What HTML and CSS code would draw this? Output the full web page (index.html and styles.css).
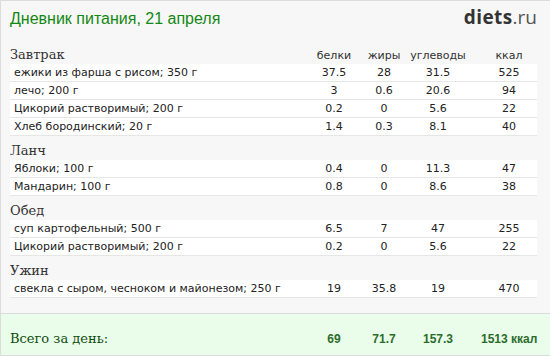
FILE: index.html
```
<!DOCTYPE html>
<html lang="ru">
<head>
<meta charset="utf-8">
<link rel="stylesheet" href="styles.css">
</head>
<body>
<div class="diary">
  <header class="top">
    <h1 class="title">Дневник питания, 21 апреля</h1>
    <div class="logo"><b>diets</b>.ru</div>
  </header>

  <section class="meal">
    <div class="meal-head grid"><span class="meal-name">Завтрак</span><span class="col">белки</span><span class="col">жиры</span><span class="col col-u">углеводы</span><span class="col k">ккал</span></div>
    <div class="row grid"><span class="food">ежики из фарша с рисом; 350 г</span><span class="num">37.5</span><span class="num">28</span><span class="num">31.5</span><span class="num k">525</span></div>
    <div class="row grid"><span class="food">лечо; 200 г</span><span class="num">3</span><span class="num">0.6</span><span class="num">20.6</span><span class="num k">94</span></div>
    <div class="row grid"><span class="food">Цикорий растворимый; 200 г</span><span class="num">0.2</span><span class="num">0</span><span class="num">5.6</span><span class="num k">22</span></div>
    <div class="row grid"><span class="food">Хлеб бородинский; 20 г</span><span class="num">1.4</span><span class="num">0.3</span><span class="num">8.1</span><span class="num k">40</span></div>
  </section>

  <section class="meal">
    <div class="meal-head grid"><span class="meal-name">Ланч</span></div>
    <div class="row grid"><span class="food">Яблоки; 100 г</span><span class="num">0.4</span><span class="num">0</span><span class="num">11.3</span><span class="num k">47</span></div>
    <div class="row grid"><span class="food">Мандарин; 100 г</span><span class="num">0.8</span><span class="num">0</span><span class="num">8.6</span><span class="num k">38</span></div>
  </section>

  <section class="meal">
    <div class="meal-head grid"><span class="meal-name">Обед</span></div>
    <div class="row grid"><span class="food">суп картофельный; 500 г</span><span class="num">6.5</span><span class="num">7</span><span class="num">47</span><span class="num k">255</span></div>
    <div class="row grid"><span class="food">Цикорий растворимый; 200 г</span><span class="num">0.2</span><span class="num">0</span><span class="num">5.6</span><span class="num k">22</span></div>
  </section>

  <section class="meal">
    <div class="meal-head grid"><span class="meal-name">Ужин</span></div>
    <div class="row grid"><span class="food">свекла с сыром, чесноком и майонезом; 250 г</span><span class="num">19</span><span class="num">35.8</span><span class="num">19</span><span class="num k">470</span></div>
  </section>

  <footer class="total">
    <div class="grid total-grid"><span class="total-label">Всего за день:</span><span class="total-num">69</span><span class="total-num">71.7</span><span class="total-num">157.3</span><span class="total-num k">1513 ккал</span></div>
  </footer>
</div>
</body>
</html>
```

FILE: styles.css
```
body {
  margin: 0;
}

.diary {
  box-sizing: border-box;
  width: 550px;
  height: 356px;
  border: 1px solid #dcdcdc;
  border-right: none;
  background: #f7f7f7;
  display: flex;
  flex-direction: column;
}

.top {
  box-sizing: border-box;
  height: 39px;
  padding: 7px 13px 0 9px;
  display: flex;
  justify-content: space-between;
  align-items: baseline;
}

.title {
  margin: 0;
  font: normal 16px/18px "Liberation Sans", Arial, sans-serif;
  color: #138813;
}

.logo {
  font: 19px/18px "Open Sans", sans-serif;
  color: #555;
}

.logo b {
  font-weight: 700;
  color: #333;
  letter-spacing: 0.4px;
}

.grid {
  display: grid;
  grid-template-columns: 1fr 50px 50px 58px 14px 56px;
  margin: 0 13px 0 9px;
}

.k {
  grid-column: 6;
}

.meal-head {
  box-sizing: border-box;
  height: 24px;
  padding-top: 6px;
  line-height: 18px;
  align-items: baseline;
}

.meal-name {
  font: 13px/18px "DejaVu Serif", serif;
  color: #333;
}

.col {
  font: 11px/18px "DejaVu Sans", sans-serif;
  color: #333;
  text-align: center;
  white-space: nowrap;
}

.row {
  box-sizing: border-box;
  height: 18px;
  background: #fff;
  border-bottom: 1px solid #e6e6e6;
  font: 11px/17px "DejaVu Sans", sans-serif;
  color: #222;
}

.food {
  padding-left: 4px;
  white-space: nowrap;
}

.num {
  text-align: center;
}

.total {
  margin-top: auto;
  box-sizing: border-box;
  height: 42px;
  border-top: 1px solid #dcdcdc;
  background: #eafcea;
  padding-top: 16px;
}

.total-grid {
  align-items: baseline;
}

.total-label {
  font: 13px/17px "DejaVu Serif", serif;
  color: #0e4e0e;
}

.total-num {
  font: bold 12px/17px "Liberation Sans", Arial, sans-serif;
  color: #2c6d2c;
  text-align: center;
  white-space: nowrap;
}
```
